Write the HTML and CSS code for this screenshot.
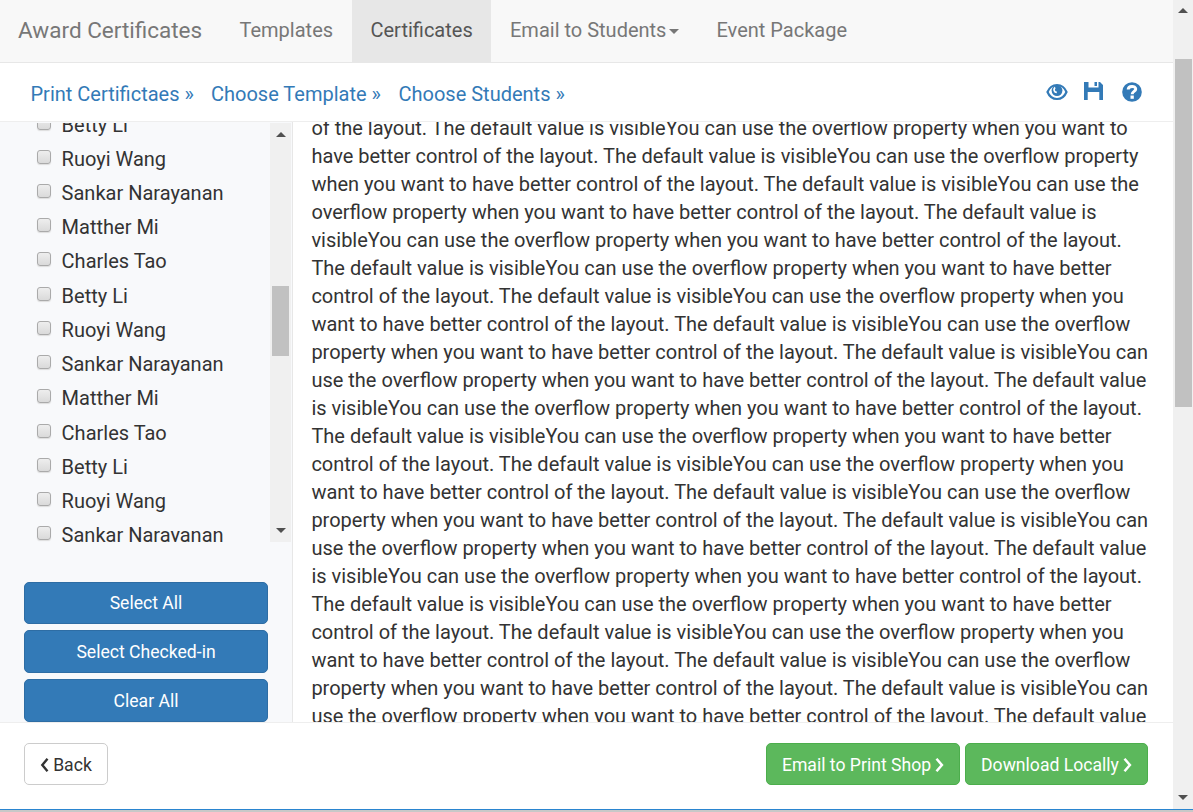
FILE: index.html
```
<!DOCTYPE html>
<html lang="en">
<head>
<meta charset="utf-8">
<title>Award Certificates</title>
<link rel="stylesheet" href="styles.css">
</head>
<body>
<div class="window">
  <div class="page">
    <nav class="navbar">
      <a class="brand">Award Certificates</a>
      <a class="nav-item nav-templates">Templates</a>
      <a class="nav-item nav-certificates active">Certificates</a>
      <a class="nav-item nav-email">Email to Students<span class="caret"></span></a>
      <a class="nav-item nav-event">Event Package</a>
    </nav>
    <header class="steps">
      <a class="step step-print">Print Certifictaes »</a>
      <a class="step step-template">Choose Template »</a>
      <a class="step step-students">Choose Students »</a>
      <div class="tools">
        <svg class="icon-eye" width="22" height="18" viewBox="0 0 22 18"><path fill="#fff" stroke="#337ab7" stroke-width="2.200" d="M1.500 9C3.300 4.700 6.700 2 11 2S18.700 4.700 20.500 9C18.700 13.300 15.300 16 11 16S3.300 13.300 1.500 9Z"/><circle cx="11" cy="7.600" r="5.400" fill="#337ab7"/><path fill="none" stroke="#fff" stroke-width="1.700" d="M9 4.400C7.200 6.600 8.200 9.300 10.800 9.400"/></svg>
        <svg class="icon-save" width="19" height="18" viewBox="0 0 19 18"><path fill="#337ab7" d="M0 0H4.500V5.500H14.500V0H16L19 3V18H15.300V10H3.700V18H0ZM10.500 0H13V4H10.500Z"/></svg>
        <svg class="icon-help" width="20" height="20" viewBox="0 0 20 20"><circle cx="10" cy="10" r="9.800" fill="#337ab7"/><path fill="none" stroke="#fff" stroke-width="3" d="M6.200 7.600C6.200 3.500 13.700 3.500 13.700 7C13.700 9.600 10.200 9.200 10.200 12.300"/><path fill="#fff" d="M8.500 13.500H11.800V16.800H8.500Z"/></svg>
      </div>
    </header>
    <main class="main">
      <aside class="sidebar">
        <div class="list">
          <div class="names">
            <label class="row"><i class="check"></i>Betty Li</label>
            <label class="row"><i class="check"></i>Ruoyi Wang</label>
            <label class="row"><i class="check"></i>Sankar Narayanan</label>
            <label class="row"><i class="check"></i>Matther Mi</label>
            <label class="row"><i class="check"></i>Charles Tao</label>
            <label class="row"><i class="check"></i>Betty Li</label>
            <label class="row"><i class="check"></i>Ruoyi Wang</label>
            <label class="row"><i class="check"></i>Sankar Narayanan</label>
            <label class="row"><i class="check"></i>Matther Mi</label>
            <label class="row"><i class="check"></i>Charles Tao</label>
            <label class="row"><i class="check"></i>Betty Li</label>
            <label class="row"><i class="check"></i>Ruoyi Wang</label>
            <label class="row"><i class="check"></i>Sankar Narayanan</label>
          </div>
          <div class="scrollbar list-scroll"><i class="arrow up"></i><i class="thumb"></i><i class="arrow down"></i></div>
        </div>
        <div class="actions">
          <button class="btn primary">Select All</button>
          <button class="btn primary">Select Checked-in</button>
          <button class="btn primary">Clear All</button>
        </div>
      </aside>
      <article class="content">
        <p class="text">of the layout. The default value is visibleYou can use the overflow property when you want to<br>
have better control of the layout. The default value is visibleYou can use the overflow property<br>
when you want to have better control of the layout. The default value is visibleYou can use the<br>
overflow property when you want to have better control of the layout. The default value is<br>
visibleYou can use the overflow property when you want to have better control of the layout.<br>
The default value is visibleYou can use the overflow property when you want to have better<br>
control of the layout. The default value is visibleYou can use the overflow property when you<br>
want to have better control of the layout. The default value is visibleYou can use the overflow<br>
property when you want to have better control of the layout. The default value is visibleYou can<br>
use the overflow property when you want to have better control of the layout. The default value<br>
is visibleYou can use the overflow property when you want to have better control of the layout.<br>
The default value is visibleYou can use the overflow property when you want to have better<br>
control of the layout. The default value is visibleYou can use the overflow property when you<br>
want to have better control of the layout. The default value is visibleYou can use the overflow<br>
property when you want to have better control of the layout. The default value is visibleYou can<br>
use the overflow property when you want to have better control of the layout. The default value<br>
is visibleYou can use the overflow property when you want to have better control of the layout.<br>
The default value is visibleYou can use the overflow property when you want to have better<br>
control of the layout. The default value is visibleYou can use the overflow property when you<br>
want to have better control of the layout. The default value is visibleYou can use the overflow<br>
property when you want to have better control of the layout. The default value is visibleYou can<br>
use the overflow property when you want to have better control of the layout. The default value</p>
      </article>
    </main>
    <footer class="footer">
      <button class="btn back"><svg width="9" height="14" viewBox="0 0 9 14"><path fill="none" stroke="#333" stroke-width="2.400" d="M7.500 .8L2.300 7L7.500 13.200"/></svg>Back</button>
      <button class="btn success email"><span>Email to Print Shop</span><svg width="9" height="14" viewBox="0 0 9 14"><path fill="none" stroke="#fff" stroke-width="2.500" d="M1.500 .8L6.900 7L1.500 13.200"/></svg></button>
      <button class="btn success download"><span>Download Locally</span><svg width="9" height="14" viewBox="0 0 9 14"><path fill="none" stroke="#fff" stroke-width="2.500" d="M1.500 .8L6.900 7L1.500 13.200"/></svg></button>
    </footer>
  </div>
  <div class="scrollbar page-scroll"><i class="arrow up"></i><i class="thumb"></i><i class="arrow down"></i></div>
</div>
<div class="edge"></div>
</body>
</html>
```
FILE: styles.css
```
* { box-sizing: border-box; }
body {
  margin: 0;
  width: 1193px;
  height: 812px;
  overflow: hidden;
  background: #fff;
  color: #333;
  font-family: Roboto, "Liberation Sans", sans-serif;
  font-size: 20px;
  white-space: nowrap;
}
.window { display: flex; height: 809px; }
.edge { height: 3px; background: #c8c8c8; border-top: 1px solid #2a85d0; }
.page { width: 1173px; display: flex; flex-direction: column; }

.navbar {
  display: flex;
  height: 63px;
  background: #f8f8f8;
  border-bottom: 1px solid #e7e7e7;
  line-height: 61px;
  color: #777;
}
.brand { width: 221px; padding-left: 18px; font-size: 22.5px; line-height: 60px; }
.nav-item { padding-left: 18.5px; }
.nav-templates { width: 131px; }
.nav-certificates { width: 139px; }
.nav-email { width: 206px; padding-left: 19px; }
.nav-event { padding-left: 19.5px; }
.active { background: #e7e7e7; color: #555; }
.caret {
  display: inline-block;
  margin-left: 3px;
  vertical-align: middle;
  border: 5px solid transparent;
  border-top-color: #777;
  border-bottom: 0;
}

.steps {
  display: flex;
  height: 59px;
  padding-left: 30.5px;
  border-bottom: 1px solid #eee;
  line-height: 63px;
  color: #337ab7;
}
.step-print { width: 180.5px; }
.step-template { width: 187.5px; }
.step-students { width: 647.5px; }
.tools { display: flex; align-items: flex-start; padding-top: 19px; }
.icon-eye { margin-top: 1px; }
.icon-save { margin-left: 16px; }
.icon-help { margin-left: 19px; }

.main { display: flex; height: 600px; overflow: hidden; }
.sidebar {
  width: 293px;
  padding-top: 1px;
  background: #f8f9fb;
  border-right: 1px solid #e7e7e7;
}
.list { display: flex; height: 419px; overflow: hidden; }
.names { width: 270px; margin-top: -16.500px; padding-left: 37px; }
.row { display: flex; height: 34.235px; line-height: 37px; }
.check {
  width: 14px;
  height: 14px;
  margin: 9px 10.600px 0 0;
  border: 1px solid #aaa;
  border-radius: 3px;
  background: linear-gradient(#eee, #dadada);
  box-shadow: 0 1px 1px #ddd;
}
.scrollbar {
  display: flex;
  flex-direction: column;
  align-items: center;
  background: #f0f0f0;
}
.thumb { width: 17px; background: #c1c1c1; }
.arrow { border: 5px solid transparent; }
.up { border-top: 0; border-bottom-color: #505050; }
.down { border-bottom: 0; border-top-color: #505050; margin-top: auto; }
.list-scroll { width: 21px; padding: 9px 0 9px; }
.list-scroll .thumb { height: 70px; margin-top: 149px; }
.page-scroll { width: 20px; padding: 8px 0 9px; }
.page-scroll .thumb { height: 348px; margin-top: 46px; }

.actions { display: flex; flex-direction: column; gap: 6px; padding: 40px 24px 0; }
.btn {
  display: flex;
  align-items: center;
  justify-content: center;
  height: 42px;
  padding: 0;
  border: 1px solid;
  border-radius: 5px;
  font: 17.6px Roboto, "Liberation Sans", sans-serif;
}
.primary { flex-shrink: 0; height: 43px; background: #337ab7; border-color: #2e6da4; color: #fff; }
.primary:first-child { height: 42px; padding-bottom: 1px; }

.content { flex: 1; padding-left: 18.4px; overflow: hidden; }
.text { margin: -8px 0 0; line-height: 28px; }

.footer { flex: 1; display: flex; padding: 20px 25px 0 24px; border-top: 1px solid #eee; }
.footer .btn { padding-top: 1px; }
.back { width: 84px; gap: 4px; margin-right: auto; background: #fff; border-color: #ccc; color: #333; }
.success { gap: 4px; background: #5cb85c; border-color: #4cae4c; color: #fff; }
.email { width: 194px; margin-right: 5px; }
.download { width: 183px; }
```
